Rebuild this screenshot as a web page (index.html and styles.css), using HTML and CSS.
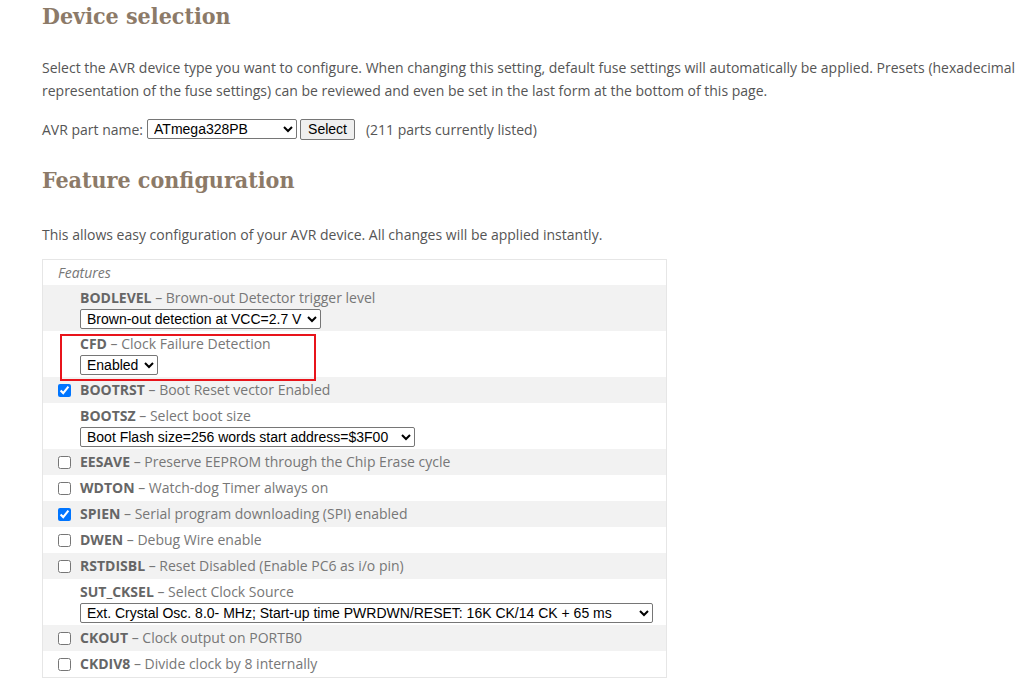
FILE: index.html
```html
<!DOCTYPE html>
<html lang="en">
<head>
  <meta charset="UTF-8">
  <title>AVR Fuse Calculator</title>
  <link rel="stylesheet" href="styles.css">
</head>
<body>
  <div class="content">
    <h2 class="section-title">Device selection</h2>
    <p class="intro">Select the AVR device type you want to configure. When changing this setting, default fuse settings will automatically be applied. Presets (hexadecimal representation of the fuse settings) can be reviewed and even be set in the last form at the bottom of this page.</p>

    <form class="part-form">
      <label for="part">AVR part name:</label>
      <select id="part" class="part-select">
        <option>ATmega328PB</option>
      </select>
      <button type="button" class="part-button">Select</button>
      <span class="part-count">(211 parts currently listed)</span>
    </form>

    <h2 class="section-title second">Feature configuration</h2>
    <p class="intro short">This allows easy configuration of your AVR device. All changes will be applied instantly.</p>

    <div class="features-wrap">
      <table class="features">
        <tr class="head">
          <td colspan="2">Features</td>
        </tr>
        <tr class="alt">
          <td class="check"></td>
          <td class="opt">
            <div class="label"><b>BODLEVEL</b> – Brown-out Detector trigger level</div>
            <select class="opt-select"><option>Brown-out detection at VCC=2.7 V</option></select>
          </td>
        </tr>
        <tr>
          <td class="check"></td>
          <td class="opt">
            <div class="label"><b>CFD</b> – Clock Failure Detection</div>
            <select class="opt-select"><option>Enabled</option></select>
          </td>
        </tr>
        <tr class="alt">
          <td class="check"><input type="checkbox" checked></td>
          <td class="opt"><div class="label"><b>BOOTRST</b> – Boot Reset vector Enabled</div></td>
        </tr>
        <tr>
          <td class="check"></td>
          <td class="opt">
            <div class="label"><b>BOOTSZ</b> – Select boot size</div>
            <select class="opt-select boot"><option>Boot Flash size=256 words start address=$3F00</option></select>
          </td>
        </tr>
        <tr class="alt">
          <td class="check"><input type="checkbox"></td>
          <td class="opt"><div class="label"><b>EESAVE</b> – Preserve EEPROM through the Chip Erase cycle</div></td>
        </tr>
        <tr>
          <td class="check"><input type="checkbox"></td>
          <td class="opt"><div class="label"><b>WDTON</b> – Watch-dog Timer always on</div></td>
        </tr>
        <tr class="alt">
          <td class="check"><input type="checkbox" checked></td>
          <td class="opt"><div class="label"><b>SPIEN</b> – Serial program downloading (SPI) enabled</div></td>
        </tr>
        <tr>
          <td class="check"><input type="checkbox"></td>
          <td class="opt"><div class="label"><b>DWEN</b> – Debug Wire enable</div></td>
        </tr>
        <tr class="alt">
          <td class="check"><input type="checkbox"></td>
          <td class="opt"><div class="label"><b>RSTDISBL</b> – Reset Disabled (Enable PC6 as i/o pin)</div></td>
        </tr>
        <tr>
          <td class="check"></td>
          <td class="opt">
            <div class="label"><b>SUT_CKSEL</b> – Select Clock Source</div>
            <select class="opt-select clock"><option>Ext. Crystal Osc. 8.0-    MHz; Start-up time PWRDWN/RESET: 16K CK/14 CK + 65 ms</option></select>
          </td>
        </tr>
        <tr class="alt">
          <td class="check"><input type="checkbox"></td>
          <td class="opt"><div class="label"><b>CKOUT</b> – Clock output on PORTB0</div></td>
        </tr>
        <tr>
          <td class="check"><input type="checkbox"></td>
          <td class="opt"><div class="label"><b>CKDIV8</b> – Divide clock by 8 internally</div></td>
        </tr>
      </table>
      <div class="highlight"></div>
    </div>
  </div>
</body>
</html>
```

FILE: styles.css
```css
body {
  margin: 0;
  font-family: "Open Sans", sans-serif;
  font-size: 14px;
  color: #555;
  background: #fff;
}
.content {
  padding: 0 0 0 42px;
  width: 980px;
}
.section-title {
  font-family: "Roboto Slab", "DejaVu Serif Condensed", "DejaVu Serif", serif;
  font-weight: bold;
  font-size: 23px;
  line-height: 32px;
  color: #8c7a68;
  margin: 0;
}
.section-title.second {
  margin-top: 23px;
}
.intro {
  line-height: 23px;
  margin: 24px 0 0;
}
.intro.short {
  margin-top: 27px;
}
.part-form {
  display: flex;
  align-items: center;
  height: 24px;
  margin-top: 15px;
}
.part-form label {
  margin-right: 4px;
}
.part-select,
.opt-select {
  font-family: "Liberation Sans", Arial, sans-serif;
  font-size: 14px;
  height: 20px;
  padding: 0 2px;
  border: 1px solid #767676;
  border-radius: 2px;
  background: #fff;
  color: #000;
}
.part-select {
  width: 150px;
}
.part-button {
  font-family: "Liberation Sans", Arial, sans-serif;
  font-size: 14px;
  height: 21px;
  margin-left: 3px;
  padding: 0 7px;
  border: 1px solid #767676;
  border-radius: 2px;
  background: #efefef;
  color: #000;
}
.part-count {
  margin-left: 11px;
}

/* feature table */
.features-wrap {
  position: relative;
  margin-top: 13px;
  width: 625px;
}
.features {
  width: 625px;
  border-collapse: collapse;
  border: 1px solid #e6e6e6;
}
.features td {
  padding: 2px 0;
  vertical-align: middle;
}
.features .head td {
  font-style: italic;
  color: #777;
  padding: 2px 0 2px 15px;
  height: 21px;
}
.features .alt {
  background: #f2f2f2;
}
.features td.check {
  width: 22px;
  padding-left: 15px;
}
.check input {
  display: block;
  margin: 0;
  width: 13px;
  height: 13px;
}
.label {
  line-height: 22px;
  color: #777;
  white-space: nowrap;
}
.label b {
  color: #666;
}
.opt-select {
  display: block;
}
.opt-select.boot {
  width: 335px;
}
.opt-select.clock {
  width: 573px;
}
.highlight {
  position: absolute;
  left: 18px;
  top: 75px;
  width: 252px;
  height: 43px;
  border: 2px solid #e8141b;
  pointer-events: none;
}
```
